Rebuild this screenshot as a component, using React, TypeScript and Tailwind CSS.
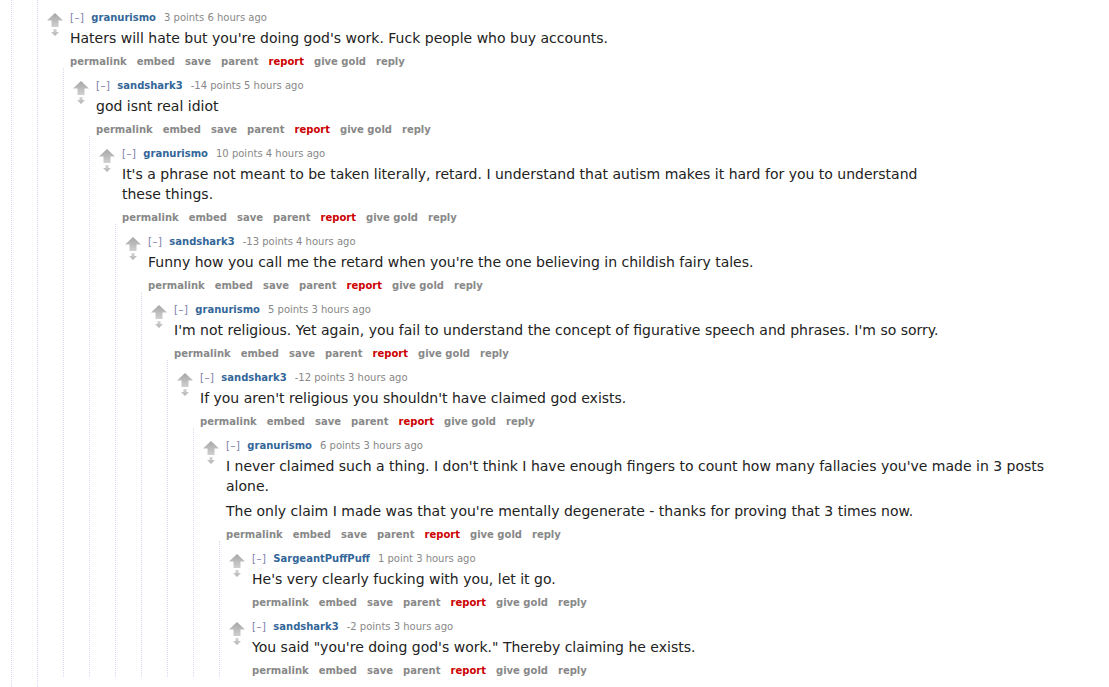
import React from 'react'

type Comment = {
  author: string
  score: string
  time: string
  body: string[]
  children?: Comment[]
}

const thread: Comment = {
  author: 'granurismo',
  score: '3 points',
  time: '6 hours ago',
  body: ["Haters will hate but you're doing god's work. Fuck people who buy accounts."],
  children: [
    {
      author: 'sandshark3',
      score: '-14 points',
      time: '5 hours ago',
      body: ['god isnt real idiot'],
      children: [
        {
          author: 'granurismo',
          score: '10 points',
          time: '4 hours ago',
          body: [
            "It's a phrase not meant to be taken literally, retard. I understand that autism makes it hard for you to understand these things."
          ],
          children: [
            {
              author: 'sandshark3',
              score: '-13 points',
              time: '4 hours ago',
              body: ["Funny how you call me the retard when you're the one believing in childish fairy tales."],
              children: [
                {
                  author: 'granurismo',
                  score: '5 points',
                  time: '3 hours ago',
                  body: [
                    "I'm not religious. Yet again, you fail to understand the concept of figurative speech and phrases. I'm so sorry."
                  ],
                  children: [
                    {
                      author: 'sandshark3',
                      score: '-12 points',
                      time: '3 hours ago',
                      body: ["If you aren't religious you shouldn't have claimed god exists."],
                      children: [
                        {
                          author: 'granurismo',
                          score: '6 points',
                          time: '3 hours ago',
                          body: [
                            "I never claimed such a thing. I don't think I have enough fingers to count how many fallacies you've made in 3 posts alone.",
                            "The only claim I made was that you're mentally degenerate - thanks for proving that 3 times now."
                          ],
                          children: [
                            {
                              author: 'SargeantPuffPuff',
                              score: '1 point',
                              time: '3 hours ago',
                              body: ["He's very clearly fucking with you, let it go."]
                            },
                            {
                              author: 'sandshark3',
                              score: '-2 points',
                              time: '3 hours ago',
                              body: ['You said "you\'re doing god\'s work." Thereby claiming he exists.']
                            }
                          ]
                        }
                      ]
                    }
                  ]
                }
              ]
            }
          ]
        }
      ]
    }
  ]
}

// gray vote arrows, drawn instead of the old sprite
function Arrows() {
  return (
    <div className="w-[22px] shrink-0 pt-[3px]">
      <svg width="18" height="25" viewBox="0 0 18 25" className="-ml-[2px]">
        <defs>
          <linearGradient id="up" x1="0" y1="0" x2="0" y2="1">
            <stop offset="0" stopColor="#a6a6a6" />
            <stop offset="1" stopColor="#d0d0d0" />
          </linearGradient>
          <linearGradient id="down" x1="0" y1="0" x2="0" y2="1">
            <stop offset="0" stopColor="#d8d8d8" />
            <stop offset="1" stopColor="#b0b0b0" />
          </linearGradient>
        </defs>
        <path d="M9 0 L17 7.5 L12.5 7.5 L12.5 14 L5.5 14 L5.5 7.5 L1 7.5 Z" fill="url(#up)" />
        <path d="M7.5 16 L10.5 16 L10.5 19 L13 19 L9 23 L5 19 L7.5 19 Z" fill="url(#down)" />
      </svg>
    </div>
  )
}

const buttons = ['permalink', 'embed', 'save', 'parent', 'report', 'give gold', 'reply']

function CommentEntry({ c }: { c: Comment }) {
  return (
    <div className="pt-[10px]">
      <div className="flex pl-[10px]">
        <Arrows />
        <div>
          <p className="text-[10px] leading-[16px] text-[#888]">
            <span className="text-[#7b7ba8] tracking-[0.5px]">[–]</span>
            <span className="ml-[7px] font-bold text-[#369]">{c.author}</span>
            <span className="ml-[8px]">{c.score} {c.time}</span>
          </p>
          <div className="mt-[2px] max-w-[830px] text-[14px] leading-[20px] text-[#222]">
            {c.body.map((p, i) => (
              <p key={i} className={i > 0 ? 'mt-[5px]' : ''}>
                {p}
              </p>
            ))}
          </div>
          <ul className="mt-[6px] -mb-[2px] flex gap-[10px] text-[10px] font-bold leading-[16px] text-[#888]">
            {buttons.map(b => (
              <li key={b} className={b === 'report' ? 'text-[#c00]' : ''}>
                {b}
              </li>
            ))}
          </ul>
        </div>
      </div>
      {c.children && (
        <div className="ml-[25px] border-l border-dotted border-[#d8d8f0]">
          {c.children.map((child, i) => (
            <CommentEntry key={i} c={child} />
          ))}
        </div>
      )}
    </div>
  )
}

export default function App() {
  return (
    <div className="h-[687px] overflow-hidden bg-white font-['DejaVu_Sans',Verdana,sans-serif]">
      <div className="ml-[11px] min-h-[687px] border-l border-dotted border-[#d8d8f0]">
        <div className="ml-[25px] min-h-[687px] border-l border-dotted border-[#d8d8f0]">
          <CommentEntry c={thread} />
        </div>
      </div>
    </div>
  )
}
